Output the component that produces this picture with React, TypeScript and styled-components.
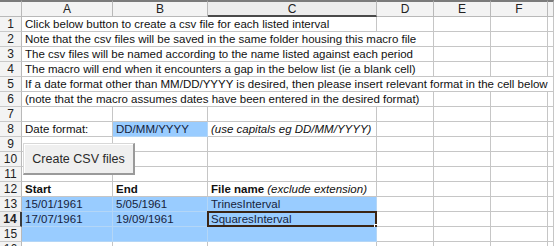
import React from "react";
import styled, { createGlobalStyle, css } from "styled-components";

const Global = createGlobalStyle`
  html, body { margin: 0; padding: 0; background: #ffffff; }
  body { font-family: "Liberation Sans", Arial, sans-serif; overflow: hidden; }
`;

const GRID = "#c6c6c6";
const BLUE = "#99ccff";

const Sheet = styled.div`
  display: grid;
  grid-template-columns: 22px 91px 95px 169px 57px 57px 57px 1fr;
  grid-template-rows: 17px;
  grid-auto-rows: 15px;
  width: 554px;
  height: 246px;
  overflow: hidden;
  font-size: 11.5px;
  color: #111;
`;

const Corner = styled.div`
  box-sizing: border-box;
  background: #f3f3f3;
  border-top: 2px solid #7b7b7b;
  border-right: 1px solid #b9b9b9;
  border-bottom: 1px solid #b9b9b9;
`;

const ColHeader = styled.div<{ $active?: boolean }>`
  box-sizing: border-box;
  background: #f3f3f3;
  border-top: 2px solid #7b7b7b;
  border-right: 1px solid #b9b9b9;
  border-bottom: 1px solid #b9b9b9;
  display: flex;
  align-items: center;
  justify-content: center;
  font-size: 12px;
  color: #222;
  ${(p) =>
    p.$active &&
    css`
      background: #ececec;
      border-bottom: 2px solid #4a4a4a;
    `}
`;

const RowHeader = styled.div<{ $active?: boolean }>`
  box-sizing: border-box;
  background: #f3f3f3;
  border-right: 1px solid #b9b9b9;
  border-bottom: 1px solid #c9c9c9;
  display: flex;
  align-items: center;
  justify-content: center;
  font-size: 12px;
  color: #222;
  ${(p) =>
    p.$active &&
    css`
      font-weight: bold;
      border-right: 2px solid #3a3a3a;
      background: #ececec;
    `}
`;

const Cell = styled.div<{
  $span?: number;
  $blue?: boolean;
  $bold?: boolean;
  $selected?: boolean;
  $host?: boolean;
}>`
  position: relative;
  box-sizing: border-box;
  grid-column: span ${(p) => p.$span ?? 1};
  border-right: 1px solid ${(p) => (p.$blue ? "#b4d6f6" : GRID)};
  border-bottom: 1px solid ${(p) => (p.$blue ? "#b4d6f6" : GRID)};
  background: ${(p) => (p.$blue ? BLUE : "#ffffff")};
  color: ${(p) => (p.$blue ? "#16233c" : "#111")};
  font-weight: ${(p) => (p.$bold ? "bold" : "normal")};
  padding: 0 0 0 3px;
  line-height: 14px;
  white-space: nowrap;
  overflow: ${(p) => (p.$host || p.$selected ? "visible" : "hidden")};
  ${(p) =>
    p.$selected &&
    css`
      &::before {
        content: "";
        position: absolute;
        left: -1px;
        top: -1px;
        right: -1px;
        bottom: -1px;
        border: 2px solid #3b2514;
        pointer-events: none;
      }
      &::after {
        content: "";
        position: absolute;
        right: -3px;
        bottom: -3px;
        width: 5px;
        height: 5px;
        background: #3b2514;
        border: 1px solid #ffffff;
        box-sizing: border-box;
      }
    `}
`;

const Note = styled.span`
  font-style: italic;
  font-weight: normal;
`;

const MacroButton = styled.button`
  position: absolute;
  top: 6px;
  left: 1px;
  width: 112px;
  height: 32px;
  z-index: 2;
  box-sizing: border-box;
  background: #efefef;
  border: 1px solid #d8d8d8;
  border-right: 2px solid #9a9a9a;
  border-bottom: 2px solid #9a9a9a;
  box-shadow: inset 1px 1px 0 #ffffff;
  font-family: "Liberation Sans", Arial, sans-serif;
  font-size: 12.5px;
  color: #2a2a2a;
  padding: 0;
  cursor: default;
`;

type Row = {
  n: number;
  cells: React.ReactNode[];
};

const cols = ["A", "B", "C", "D", "E", "F", ""];

const emptyTail = (from: number) =>
  Array.from({ length: 7 - from }, (_, i) => <Cell key={`e${from + i}`} />);

export default function App() {
  const rows: Row[] = [
    {
      n: 1,
      cells: [
        <Cell key="a" $span={3}>
          Click below button to create a csv file for each listed interval
        </Cell>,
        ...emptyTail(3),
      ],
    },
    {
      n: 2,
      cells: [
        <Cell key="a" $span={4}>
          Note that the csv files will be saved in the same folder housing this macro file
        </Cell>,
        ...emptyTail(4),
      ],
    },
    {
      n: 3,
      cells: [
        <Cell key="a" $span={4}>
          The csv files will be named according to the name listed against each period
        </Cell>,
        ...emptyTail(4),
      ],
    },
    {
      n: 4,
      cells: [
        <Cell key="a" $span={4}>
          The macro will end when it encounters a gap in the below list (ie a blank cell)
        </Cell>,
        ...emptyTail(4),
      ],
    },
    {
      n: 5,
      cells: [
        <Cell key="a" $span={7}>
          If a date format other than MM/DD/YYYY is desired, then please insert relevant format in the cell below
        </Cell>,
      ],
    },
    {
      n: 6,
      cells: [
        <Cell key="a" $span={4}>
          (note that the macro assumes dates have been entered in the desired format)
        </Cell>,
        ...emptyTail(4),
      ],
    },
    { n: 7, cells: emptyTail(0) },
    {
      n: 8,
      cells: [
        <Cell key="a">Date format:</Cell>,
        <Cell key="b" $blue>
          DD/MM/YYYY
        </Cell>,
        <Cell key="c">
          <Note>(use capitals eg DD/MM/YYYY)</Note>
        </Cell>,
        ...emptyTail(3),
      ],
    },
    {
      n: 9,
      cells: [
        <Cell key="a" $host>
          <MacroButton type="button">Create CSV files</MacroButton>
        </Cell>,
        ...emptyTail(1),
      ],
    },
    { n: 10, cells: emptyTail(0) },
    { n: 11, cells: emptyTail(0) },
    {
      n: 12,
      cells: [
        <Cell key="a" $bold>
          Start
        </Cell>,
        <Cell key="b" $bold>
          End
        </Cell>,
        <Cell key="c" $bold>
          File name <Note>(exclude extension)</Note>
        </Cell>,
        ...emptyTail(3),
      ],
    },
    {
      n: 13,
      cells: [
        <Cell key="a" $blue>
          15/01/1961
        </Cell>,
        <Cell key="b" $blue>
          5/05/1961
        </Cell>,
        <Cell key="c" $blue>
          TrinesInterval
        </Cell>,
        ...emptyTail(3),
      ],
    },
    {
      n: 14,
      cells: [
        <Cell key="a" $blue>
          17/07/1961
        </Cell>,
        <Cell key="b" $blue>
          19/09/1961
        </Cell>,
        <Cell key="c" $blue $selected>
          SquaresInterval
        </Cell>,
        ...emptyTail(3),
      ],
    },
    {
      n: 15,
      cells: [
        <Cell key="a" $blue />,
        <Cell key="b" $blue />,
        <Cell key="c" $blue />,
        ...emptyTail(3),
      ],
    },
    { n: 16, cells: emptyTail(0) },
  ];

  return (
    <>
      <Global />
      <Sheet>
        <Corner />
        {cols.map((c, i) => (
          <ColHeader key={`h${i}`} $active={c === "C"}>
            {c}
          </ColHeader>
        ))}
        {rows.map((r) => (
          <React.Fragment key={r.n}>
            <RowHeader $active={r.n === 14}>{r.n}</RowHeader>
            {r.cells}
          </React.Fragment>
        ))}
      </Sheet>
    </>
  );
}
